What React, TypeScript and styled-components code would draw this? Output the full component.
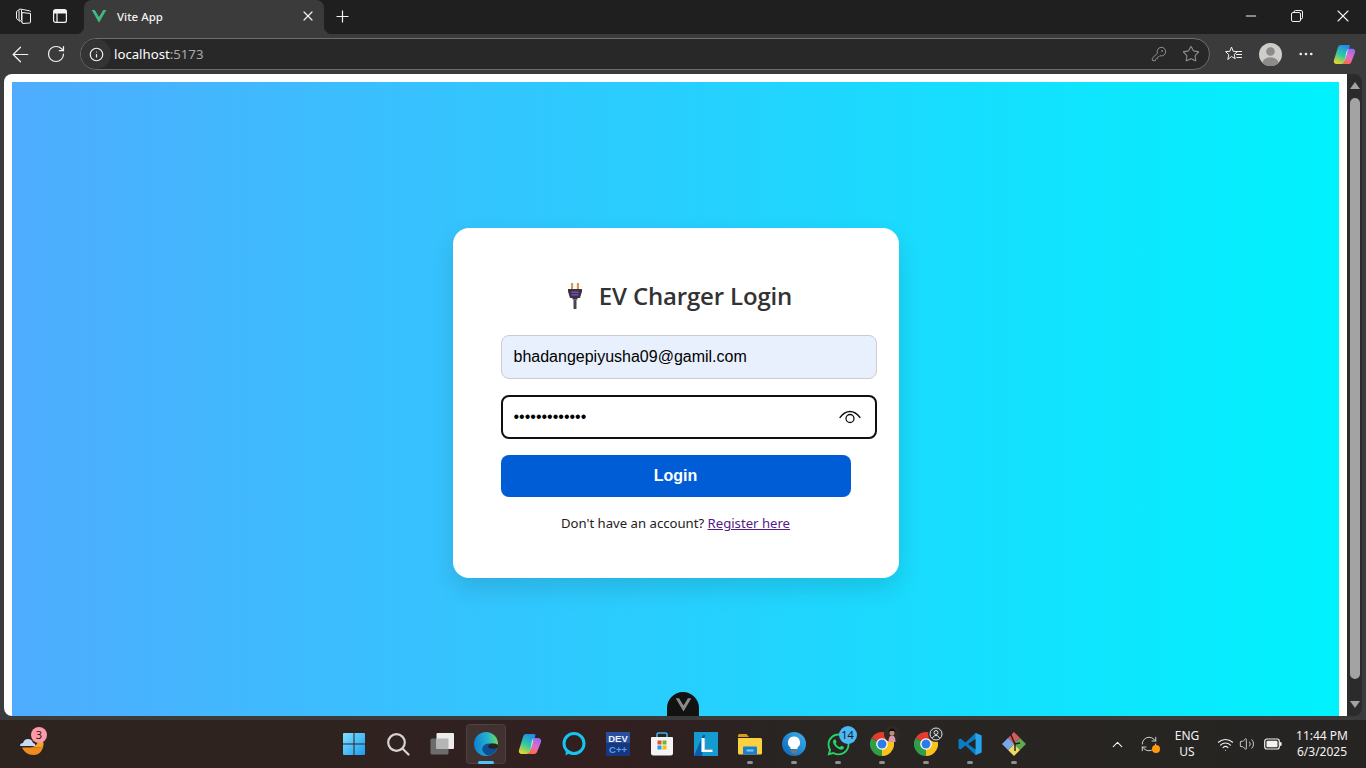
import styled, { createGlobalStyle } from 'styled-components';
import {
  ArrowLeft,
  ChevronUp,
  Info,
  KeyRound,
  Minus,
  MoreHorizontal,
  Plus,
  RefreshCw,
  RotateCw,
  Star,
  Volume2,
  Wifi,
  X,
} from 'lucide-react';
import { FaWhatsapp } from 'react-icons/fa';

const GlobalStyle = createGlobalStyle`
  html, body {
    margin: 0;
    padding: 0;
    overflow: hidden;
    background: #1f1f1f;
  }
  * {
    box-sizing: content-box;
  }
`;

const uiFont = '"Noto Sans", "Open Sans", sans-serif';

const Screen = styled.div`
  width: 1366px;
  height: 768px;
  display: flex;
  flex-direction: column;
  overflow: hidden;
  font-family: ${uiFont};
`;

/* browser chrome */

const TitleBar = styled.div`
  height: 34px;
  flex-shrink: 0;
  display: flex;
  background: #1f1f1f;
  color: #f2f2f2;
`;

const ChromeCell = styled.div<{ $w: number; $lift?: number }>`
  width: ${({ $w }) => $w}px;
  flex-shrink: 0;
  padding-bottom: ${({ $lift }) => $lift ?? 0}px;
  display: flex;
  align-items: center;
  justify-content: center;
  position: relative;
`;

const LeftGroup = styled.div`
  display: flex;
  padding-left: 8px;
  gap: 4px;
  margin-right: 8px;
`;

const Tab = styled.div`
  width: 240px;
  height: 32px;
  padding-bottom: 2px;
  display: flex;
  align-items: center;
  flex-shrink: 0;
  background: #3b3b3b;
  border-radius: 8px 8px 0 0;
  position: relative;

  &::before,
  &::after {
    content: '';
    position: absolute;
    bottom: 0;
    width: 8px;
    height: 8px;
  }
  &::before {
    left: -8px;
    background: radial-gradient(circle at 0 0, transparent 8px, #3b3b3b 8.5px);
  }
  &::after {
    right: -8px;
    background: radial-gradient(circle at 100% 0, transparent 8px, #3b3b3b 8.5px);
  }
`;

const Favicon = styled.div`
  margin-left: 7px;
  width: 16px;
  height: 16px;
  display: flex;
`;

const TabTitle = styled.span`
  margin-left: 10px;
  flex: 1;
  font-size: 11.5px;
  font-weight: 500;
  color: #f0f0f0;
`;

const TabClose = styled.div`
  width: 30px;
  margin-right: 1px;
  display: flex;
  justify-content: center;
`;

const Spacer = styled.div`
  flex: 1;
`;

const Toolbar = styled.div`
  height: 40px;
  flex-shrink: 0;
  display: flex;
  align-items: center;
  padding-left: 2px;
  background: #3b3b3b;
  color: #f2f2f2;
`;

const UrlPill = styled.div`
  width: 1128px;
  height: 30px;
  margin: 0 6px;
  display: flex;
  align-items: center;
  background: #282828;
  border: 1px solid #6e6e6e;
  border-radius: 16px;
`;

const InfoChip = styled.div`
  width: 30px;
  height: 30px;
  border-radius: 50%;
  background: #343434;
  display: flex;
  align-items: center;
  justify-content: center;
`;

const UrlText = styled.span`
  margin-left: 3px;
  flex: 1;
  font-size: 13.2px;
  color: #fff;
`;

const UrlPort = styled.span`
  color: #a8a8a8;
`;

const PillActions = styled.div`
  display: flex;
  padding-right: 2px;
  color: #8f8f8f;
`;

const Avatar = styled.div`
  width: 23px;
  height: 23px;
  border-radius: 50%;
  overflow: hidden;
  display: flex;
`;

/* page */

const Viewport = styled.div`
  height: 642px;
  flex-shrink: 0;
  display: flex;
  padding: 0 4px;
  background: #3b3b3b;
`;

const Page = styled.main`
  flex: 1;
  min-width: 0;
  padding: 8px 8px 0;
  background: #fff;
  border-radius: 8px 0 0 8px;
  overflow: hidden;
  position: relative;
`;

const GradientBackdrop = styled.div`
  height: 642px;
  display: flex;
  align-items: center;
  justify-content: center;
  background: linear-gradient(to right, #4facfe, #00f2fe);
`;

const Card = styled.section`
  width: 350px;
  height: 254px;
  padding: 48px;
  background: #fff;
  border-radius: 16px;
  box-shadow: 0 10px 25px rgba(0, 0, 0, 0.12);
`;

const Heading = styled.h2`
  margin: 0;
  height: 39px;
  padding-left: 7px;
  display: flex;
  align-items: center;
  justify-content: center;
  gap: 15px;
  font-family: "Open Sans", "Noto Sans", sans-serif;
  font-size: 24px;
  font-weight: 600;
  letter-spacing: -0.17px;
  color: #333;
`;

const FieldWrap = styled.div`
  position: relative;
  margin-top: 16px;
  width: 376px;
  height: 44px;

  ${Heading} + & {
    margin-top: 20px;
  }
`;

const TextInput = styled.input<{ $focused?: boolean }>`
  width: 350px;
  height: 18px;
  padding: ${({ $focused }) => ($focused ? '11px' : '12px')};
  display: block;
  font-family: "Liberation Sans", Arial, sans-serif;
  font-size: 16px;
  color: #000;
  background: ${({ $focused }) => ($focused ? '#fff' : '#e8f0fe')};
  border: ${({ $focused }) => ($focused ? '2px solid #101010' : '1px solid #ccc')};
  border-radius: 8px;
  outline: none;
`;

const EyeButton = styled.button`
  position: absolute;
  right: 15px;
  top: 13px;
  width: 24px;
  height: 18px;
  padding: 0;
  border: 0;
  background: none;
  display: flex;
`;

const LoginButton = styled.button`
  display: block;
  width: 350px;
  height: 42px;
  margin-top: 16px;
  padding: 0;
  border: 0;
  border-radius: 8px;
  background: #005dd6;
  color: #fff;
  font-family: "Liberation Sans", Arial, sans-serif;
  font-size: 16px;
  font-weight: 700;
`;

const Hint = styled.p`
  margin: 16px 0 0;
  text-align: center;
  font-family: "Noto Sans", "Open Sans", sans-serif;
  font-size: 13.15px;
  line-height: 20px;
  color: #222;
`;

const HintLink = styled.a`
  color: #551a8b;
  text-decoration: underline;
`;

const DevtoolsHandle = styled.div`
  position: absolute;
  left: 663px;
  bottom: 0;
  width: 32px;
  height: 24px;
  border-radius: 16px 16px 0 0;
  background: #121212;
  display: flex;
  align-items: center;
  justify-content: center;
`;

const Scrollbar = styled.div`
  width: 15px;
  flex-shrink: 0;
  display: flex;
  flex-direction: column;
  align-items: center;
  background: #2b2b2b;
  border-radius: 0 8px 8px 0;
`;

const ScrollArrow = styled.div<{ $down?: boolean }>`
  width: 0;
  height: 0;
  margin: ${({ $down }) => ($down ? '22px 0 8px' : '8px 0 9px')};
  border-left: 5px solid transparent;
  border-right: 5px solid transparent;
  ${({ $down }) => ($down ? 'border-top: 7px solid #a3a3a3;' : 'border-bottom: 7px solid #a3a3a3;')}
`;

const ScrollThumb = styled.div`
  flex: 1;
  width: 10px;
  border-radius: 5px;
  background: #a3a3a3;
`;

/* taskbar */

const Taskbar = styled.footer`
  height: 48px;
  flex-shrink: 0;
  display: flex;
  align-items: center;
  padding-left: 10px;
  border-top: 4px solid #3b3b3b;
  background: linear-gradient(to right, #2e241f 0%, #2f2320 25%, #321f20 45%, #282522 58%, #262422 100%);
  color: #fff;
`;

const AppCell = styled.div`
  width: 44px;
  height: 48px;
  flex-shrink: 0;
  display: flex;
  align-items: center;
  justify-content: center;
  position: relative;
`;

const ActiveBox = styled.div`
  position: absolute;
  left: 2px;
  top: 4px;
  width: 38px;
  height: 38px;
  border: 1px solid rgba(255, 255, 255, 0.07);
  border-radius: 4px;
  background: rgba(255, 255, 255, 0.08);
`;

const RunDot = styled.div<{ $active?: boolean }>`
  position: absolute;
  bottom: 4px;
  left: 50%;
  transform: translateX(-50%);
  width: ${({ $active }) => ($active ? 16 : 6)}px;
  height: 3px;
  border-radius: 2px;
  background: ${({ $active }) => ($active ? '#4cc2ff' : '#8f8f8f')};
`;

const IconLayer = styled.div`
  position: relative;
  display: flex;
`;

const Badge = styled.div<{ $bg: string; $size: number; $right: number; $top: number }>`
  position: absolute;
  right: ${({ $right }) => $right}px;
  top: ${({ $top }) => $top}px;
  width: ${({ $size }) => $size}px;
  height: ${({ $size }) => $size}px;
  border-radius: 50%;
  background: ${({ $bg }) => $bg};
  color: #1a1a1a;
  font-size: 11px;
  line-height: ${({ $size }) => $size}px;
  text-align: center;
`;

const CenterGroup = styled.div`
  display: flex;
  margin-left: 278px;
`;

const TrayGroup = styled.div`
  display: flex;
  margin-left: 67px;
  height: 48px;
`;

const TrayCell = styled.div<{ $w: number; $ml?: number }>`
  width: ${({ $w }) => $w}px;
  margin-left: ${({ $ml }) => $ml ?? 0}px;
  display: flex;
  flex-direction: column;
  align-items: center;
  justify-content: center;
  position: relative;
  font-size: 12px;
  line-height: 16px;
  color: #f2f2f2;
`;

const SyncDot = styled.div`
  position: absolute;
  left: 21px;
  top: 25px;
  width: 8px;
  height: 8px;
  border-radius: 50%;
  background: #ff9a0a;
`;

/* drawings */

const VueMark = ({ size, light, dark }: { size: number; light: string; dark: string }) => (
  <svg width={size} height={size} viewBox="0 0 24 24">
    <path d="M1 3h5l6 10 6-10h5L12 22z" fill={light} />
    <path d="M6 3h4l2 3.5L14 3h4l-6 10z" fill={dark} />
  </svg>
);

const Workspaces = () => (
  <svg width="18" height="18" viewBox="0 0 18 18" fill="none" stroke="#f2f2f2" strokeWidth="1">
    <path d="M1.500 4.500 5 2l9.500 1.800a1 1 0 0 1 1 1" />
    <path d="M1.500 4.500V11.500l3.500 3" />
    <path d="M4 3.500v9l3.600 3" />
    <path d="M6.500 3v10" />
    <path d="M7 5.500l8.500 1V15a1 1 0 0 1-1 1L8 16.500a1 1 0 0 1-1-1z" />
  </svg>
);

const TabActions = () => (
  <svg width="16" height="16" viewBox="0 0 16 16" fill="none" stroke="#f2f2f2" strokeWidth="1.2">
    <rect x="1.600" y="1.600" width="12.800" height="12.800" rx="2" />
    <path d="M1.600 5h12.800M5 5v9.400" />
    <path d="M2 2h12v3H2z" fill="#f2f2f2" stroke="none" />
  </svg>
);

const RestoreIcon = () => (
  <svg width="12" height="12" viewBox="0 0 12 12" fill="none" stroke="#f2f2f2" strokeWidth="1">
    <rect x="0.500" y="2.500" width="9" height="9" rx="1.500" />
    <path d="M3 2.200V2a1.500 1.500 0 0 1 1.500-1.500h5.500A1.500 1.500 0 0 1 11.500 2v5.500A1.500 1.500 0 0 1 10 9" />
  </svg>
);

const FavoritesIcon = () => (
  <svg width="18" height="18" viewBox="0 0 18 18" fill="none" stroke="#f2f2f2" strokeWidth="1">
    <path d="M6.500 2l1.700 4.300 4.300.3-3.300 2.800 1 4.300-3.700-2.200-3.700 3 1-4.800L.6 6.600l4.300-.3z" strokeLinejoin="round" />
    <path d="M12 6.500h5M11 9.500h6M11.500 12.500h5.500" />
  </svg>
);

const ProfileGlyph = () => (
  <svg width="23" height="23" viewBox="0 0 23 23">
    <rect width="23" height="23" fill="#cfcdca" />
    <circle cx="11.500" cy="8.500" r="4.300" fill="#8b8b8b" />
    <ellipse cx="11.500" cy="20" rx="8" ry="5.800" fill="#8b8b8b" />
  </svg>
);

const CopilotMark = ({ size, id }: { size: number; id: string }) => (
  <svg width={size} height={size} viewBox="0 0 24 24">
    <defs>
      <linearGradient id={`${id}a`} x1="0.6" y1="0" x2="0.2" y2="1">
        <stop offset="0" stopColor="#1f8fe8" />
        <stop offset="0.5" stopColor="#2ec9a0" />
        <stop offset="1" stopColor="#f5d327" />
      </linearGradient>
      <linearGradient id={`${id}b`} x1="0.7" y1="0" x2="0.3" y2="1">
        <stop offset="0" stopColor="#8f6cf0" />
        <stop offset="0.5" stopColor="#e868c8" />
        <stop offset="1" stopColor="#ff6a3c" />
      </linearGradient>
    </defs>
    <path d="M8 2h8c1.200 0 1.800.7 1.300 2L12 20c-.7 1.500-2 2-3.500 2H4c-2.500 0-3.700-1.800-3-4L5 5c.6-2 1.500-3 3-3z" fill={`url(#${id}a)`} />
    <path d="M15.500 6H20c2.500 0 3.700 1.800 3 4l-4 10c-.7 1.500-1.800 2-3.300 2H8c1.800 0 3.200-.8 4-2.500L14 14c.6-1.800 1-4 1.500-8z" fill={`url(#${id}b)`} />
    <path d="M15.500 6c-.4 3-.9 6-1.500 8l-2 5.500c.4-2.500 1-4 1.200-6.500.2-2.500 1-5 2.300-7z" fill="#fff" opacity="0.75" />
  </svg>
);

const WidgetIcon = () => (
  <svg width="24" height="24" viewBox="0 0 24 24">
    <path d="M2 15.500h18c2 0 3-2.500 3.500-5 .5 6-3 12.500-10 12.500-5.500 0-9.500-3-11.500-7.500z" fill="#f08c1e" />
    <path d="M18 9c2 0 4 0 5.500 1.500 0 3-1.500 5-3.500 5H8c5 0 9-1.500 10-6.500z" fill="#f5a623" />
    <path d="M0 14c0-1.800 1.300-3 3-3 .7-2.500 2.700-4 5-4 2.500 0 4.500 1.500 5 4 1.300 0 2.500 1.200 2.500 3z" fill="#c9dcf5" />
  </svg>
);

const WindowsLogo = () => (
  <svg width="24" height="24" viewBox="0 0 24 24">
    <defs>
      <linearGradient id="winTile" x1="0" y1="0" x2="1" y2="1">
        <stop offset="0" stopColor="#7fe0ff" />
        <stop offset="1" stopColor="#1a9cf0" />
      </linearGradient>
    </defs>
    <path d="M1 2a1 1 0 0 1 1-1h9.500v10.500H1zM12.500 1H22a1 1 0 0 1 1 1v9.500H12.500zM1 12.500h10.500V23H2a1 1 0 0 1-1-1zM12.500 12.500H23V22a1 1 0 0 1-1 1h-9.500z" fill="url(#winTile)" />
  </svg>
);

const SearchGlyph = () => (
  <svg width="24" height="24" viewBox="0 0 24 24" fill="none" stroke="#d8d4d0" strokeWidth="2.200">
    <circle cx="10.500" cy="10.500" r="8.300" />
    <path d="M16.500 16.500l6 6" strokeLinecap="round" />
  </svg>
);

const TaskViewGlyph = () => (
  <svg width="24" height="24" viewBox="0 0 24 24">
    <rect x="0.500" y="6.500" width="18" height="16" rx="1.500" fill="#6c6c6c" />
    <rect x="6.500" y="1" width="17.500" height="16" rx="1" fill="#ececec" />
    <rect x="6.500" y="6.500" width="12" height="10.500" fill="#b5b5b5" />
  </svg>
);

const EdgeLogo = () => (
  <svg width="24" height="24" viewBox="0 0 24 24">
    <defs>
      <linearGradient id="edgeBody" x1="0" y1="0.4" x2="1" y2="0.3">
        <stop offset="0" stopColor="#0f7fd4" />
        <stop offset="0.6" stopColor="#27b5c8" />
        <stop offset="1" stopColor="#6fdc5a" />
      </linearGradient>
    </defs>
    <circle cx="12" cy="12" r="12" fill="url(#edgeBody)" />
    <path d="M24 14.500c-2-2.500-5.500-3.500-9.500-3-4.500.5-7 3.500-6 7 .6 2.300 3 4.500 6 5.200 4.500-.8 8-4.500 9.500-9.200z" fill="#0d4f96" />
    <path d="M24 12.800c-3-1.800-7-1.500-9 0-1.500 1.200-1.200 3 .8 3.500 2.500.6 5 .5 7.700-.3.300-1 .5-2.100.5-3.200z" fill="#2b211e" />
  </svg>
);

const AlexaRing = () => (
  <svg width="24" height="24" viewBox="0 0 24 24" fill="none">
    <circle cx="12" cy="11.500" r="10" stroke="#12c6f0" strokeWidth="3" />
    <path d="M4 16.500 3.500 23.500 9.500 20z" fill="#12c6f0" />
  </svg>
);

const DevCpp = () => (
  <svg width="24" height="24" viewBox="0 0 24 24">
    <rect width="24" height="24" fill="#17387f" />
    <rect width="24" height="11" fill="#2a4f9c" />
    <text x="12" y="10" textAnchor="middle" fontFamily="Liberation Sans" fontWeight="700" fontSize="9.500" fill="#eef2ff">DEV</text>
    <text x="12" y="20.500" textAnchor="middle" fontFamily="Liberation Sans" fontWeight="700" fontSize="9.500" fill="#5aa0f0">C++</text>
  </svg>
);

const StoreBag = () => (
  <svg width="24" height="24" viewBox="0 0 24 24">
    <path d="M7 5V2.500A1.500 1.500 0 0 1 8.500 1h7A1.500 1.500 0 0 1 17 2.500V5" fill="none" stroke="#3fb4e8" strokeWidth="1.600" />
    <path d="M1 6a1 1 0 0 1 1-1h20a1 1 0 0 1 1 1v15a2.500 2.500 0 0 1-2.500 2.500h-17A2.500 2.500 0 0 1 1 21z" fill="#f4f4f4" />
    <rect x="7.500" y="8.500" width="4" height="4" fill="#e8502a" />
    <rect x="12.500" y="8.500" width="4" height="4" fill="#72b52a" />
    <rect x="7.500" y="13.500" width="4" height="4" fill="#1fa0e8" />
    <rect x="12.500" y="13.500" width="4" height="4" fill="#f9b916" />
  </svg>
);

const LTile = () => (
  <svg width="24" height="24" viewBox="0 0 24 24">
    <rect width="24" height="24" fill="#149bd0" />
    <path d="M0 24 9 3h2L8 24z" fill="#0c5aa8" />
    <text x="12.500" y="19.500" textAnchor="middle" fontFamily="Liberation Sans" fontWeight="700" fontSize="21" fill="#fff">L</text>
  </svg>
);

const FolderIcon = () => (
  <svg width="24" height="24" viewBox="0 0 24 24">
    <path d="M0 3.500A1.500 1.500 0 0 1 1.500 2h7L11 5h-11z" fill="#d99a16" />
    <path d="M0 6h22.500A1.500 1.500 0 0 1 24 7.500V21a1.500 1.500 0 0 1-1.500 1.500h-21A1.500 1.500 0 0 1 0 21z" fill="#fbd13f" />
    <path d="M6 14.500h12a1 1 0 0 1 1 1v7H5v-7a1 1 0 0 1 1-1z" fill="#1a7fd0" />
    <rect x="8.500" y="17.500" width="7" height="2" fill="#7ec8f5" />
  </svg>
);

const BulbIcon = () => (
  <svg width="24" height="24" viewBox="0 0 24 24">
    <defs>
      <linearGradient id="bulbDisk" x1="0" y1="1" x2="1" y2="0">
        <stop offset="0" stopColor="#0b62b8" />
        <stop offset="1" stopColor="#3cb4ef" />
      </linearGradient>
    </defs>
    <circle cx="12" cy="12" r="12" fill="url(#bulbDisk)" />
    <path d="M12 4.500a6 6 0 0 1 3.500 10.900V17h-7v-1.600A6 6 0 0 1 12 4.500z" fill="#fff" />
    <path d="M9 18h6v2l-1.500 1.500h-3L9 20z" fill="#777" />
  </svg>
);

const ChromeLogo = () => (
  <svg width="24" height="24" viewBox="0 0 24 24">
    <path d="M12 12 1.600 6A12 12 0 0 1 22.400 6z" fill="#e33b2e" />
    <path d="M12 12 22.400 6A12 12 0 0 1 12 24z" fill="#fbc21b" />
    <path d="M12 12 12 24A12 12 0 0 1 1.600 6z" fill="#2f9e46" />
    <circle cx="12" cy="12" r="5.800" fill="#fff" />
    <circle cx="12" cy="12" r="4.500" fill="#2a7de8" />
  </svg>
);

const ChromePhoto = () => (
  <svg width="16" height="16" viewBox="0 0 16 16">
    <circle cx="8" cy="8" r="8" fill="#2f2a26" />
    <path d="M4.500 16c0-4 1-6.500 3.500-6.500s3.500 2.500 3.500 6.500z" fill="#d99aa8" />
    <circle cx="8" cy="7" r="2.500" fill="#c48a78" />
    <path d="M4.500 7c0-3 1.500-4.500 3.500-4.500S11.500 4 11.500 7L10 5H6z" fill="#141010" />
  </svg>
);

const ChromeProfile = () => (
  <svg width="16" height="16" viewBox="0 0 16 16" fill="none" stroke="#e0e0e0" strokeWidth="1">
    <circle cx="8" cy="8" r="8" fill="#2b2b2b" stroke="none" />
    <circle cx="8" cy="8" r="6" />
    <circle cx="8" cy="6.500" r="2" />
    <path d="M4.500 12c.8-1.700 2-2.500 3.500-2.500s2.700.8 3.500 2.500" />
  </svg>
);

const VsCodeLogo = () => (
  <svg width="24" height="24" viewBox="0 0 24 24">
    <path d="M17.500 1 23.500 3.500v17L17.500 23 7.500 13.500 2.500 17.500 0.500 16.500v-9l2-1 5 4z" fill="#0a7cc4" />
    <path d="M17.500 1 23.500 3.500v17L17.500 23z" fill="#2aa3ea" />
    <path d="M17.500 7 10 12l7.500 5.500z" fill="#262422" />
  </svg>
);

const GitDiamond = () => (
  <svg width="24" height="24" viewBox="0 0 24 24">
    <path d="M6 6 12 0l6 6-6 6z" fill="#d75a5a" />
    <path d="M12 12l6-6 6 6-6 6z" fill="#5fa84f" />
    <path d="M6 18l6-6 6 6-6 6z" fill="#ecd968" />
    <path d="M0 12l6-6 6 6-6 6z" fill="#7ba7ec" />
    <path d="M8 1l5 11v7M13 12l5-1" fill="none" stroke="#1c1c1c" strokeWidth="1.400" />
  </svg>
);

const PlugEmoji = () => (
  <svg width="18" height="26" viewBox="0 0 18 26">
    <rect x="5" y="0" width="2.200" height="6" fill="#d49a5a" />
    <rect x="10.800" y="0" width="2.200" height="6" fill="#d49a5a" />
    <path d="M2 6h14v2.500l-2 6.500h-2.500v1.500h-5V15H4L2 8.500z" fill="#3a3442" />
    <rect x="5.500" y="8.500" width="7" height="1.500" fill="#7a4bc0" />
    <rect x="5.500" y="11" width="7" height="1.500" fill="#7a4bc0" />
    <rect x="7.500" y="16.500" width="3" height="9.500" fill="#4a4550" />
  </svg>
);

const EyeGlyph = () => (
  <svg width="24" height="18" viewBox="0 0 24 18" fill="none" stroke="#111" strokeWidth="1.300" strokeLinecap="round">
    <path d="M2 9.500C5 5.500 8.500 3.500 12 3.500s7 2 10 6" />
    <circle cx="12" cy="10.500" r="4" />
  </svg>
);

const TrayBattery = () => (
  <svg width="18" height="12" viewBox="0 0 18 12" fill="none">
    <rect x="0.700" y="1" width="14.600" height="10" rx="2.200" stroke="#f2f2f2" strokeWidth="1.200" />
    <rect x="2.500" y="2.800" width="11" height="6.400" rx="1" fill="#f2f2f2" />
    <rect x="16" y="4" width="1.600" height="4" rx="0.700" fill="#f2f2f2" />
  </svg>
);

const App = () => {
  return (
    <Screen>
      <GlobalStyle />
      <TitleBar>
        <LeftGroup>
          <ChromeCell $w={32} $lift={2}>
            <Workspaces />
          </ChromeCell>
          <ChromeCell $w={32} $lift={2}>
            <TabActions />
          </ChromeCell>
        </LeftGroup>
        <Tab>
          <Favicon>
            <VueMark size={16} light="#41b883" dark="#3b3b3b" />
          </Favicon>
          <TabTitle>Vite App</TabTitle>
          <TabClose>
            <X size={16} strokeWidth={1.2} absoluteStrokeWidth />
          </TabClose>
        </Tab>
        <ChromeCell $w={36} $lift={2}>
          <Plus size={19} strokeWidth={1.2} absoluteStrokeWidth />
        </ChromeCell>
        <Spacer />
        <ChromeCell $w={46} $lift={2}>
          <Minus size={16} strokeWidth={1.1} absoluteStrokeWidth />
        </ChromeCell>
        <ChromeCell $w={46} $lift={2}>
          <RestoreIcon />
        </ChromeCell>
        <ChromeCell $w={46} $lift={2}>
          <X size={20} strokeWidth={1.1} absoluteStrokeWidth />
        </ChromeCell>
      </TitleBar>

      <Toolbar>
        <ChromeCell $w={36}>
          <ArrowLeft size={25} strokeWidth={1.2} absoluteStrokeWidth />
        </ChromeCell>
        <ChromeCell $w={36}>
          <RotateCw size={20} strokeWidth={1.2} absoluteStrokeWidth />
        </ChromeCell>
        <UrlPill>
          <InfoChip>
            <Info size={15} strokeWidth={1.2} absoluteStrokeWidth />
          </InfoChip>
          <UrlText>
            localhost<UrlPort>:5173</UrlPort>
          </UrlText>
          <PillActions>
            <ChromeCell $w={32}>
              <KeyRound size={16} strokeWidth={1} absoluteStrokeWidth />
            </ChromeCell>
            <ChromeCell $w={32}>
              <Star size={18} strokeWidth={1.1} absoluteStrokeWidth />
            </ChromeCell>
          </PillActions>
        </UrlPill>
        <ChromeCell $w={36}>
          <FavoritesIcon />
        </ChromeCell>
        <ChromeCell $w={36}>
          <Avatar>
            <ProfileGlyph />
          </Avatar>
        </ChromeCell>
        <ChromeCell $w={36}>
          <MoreHorizontal size={18} strokeWidth={1.6} />
        </ChromeCell>
        <ChromeCell $w={40}>
          <CopilotMark size={23} id="copilotBar" />
        </ChromeCell>
      </Toolbar>

      <Viewport>
        <Page>
          <GradientBackdrop>
            <Card>
              <Heading>
                <PlugEmoji />
                EV Charger Login
              </Heading>
              <FieldWrap>
                <TextInput type="email" defaultValue="bhadangepiyusha09@gamil.com" />
              </FieldWrap>
              <FieldWrap>
                <TextInput type="password" defaultValue="Piyusha@12345" $focused />
                <EyeButton type="button" aria-label="Show password">
                  <EyeGlyph />
                </EyeButton>
              </FieldWrap>
              <LoginButton type="button">Login</LoginButton>
              <Hint>
                Don't have an account? <HintLink href="#register">Register here</HintLink>
              </Hint>
            </Card>
          </GradientBackdrop>
          <DevtoolsHandle>
            <VueMark size={17} light="#8a8a8a" dark="#121212" />
          </DevtoolsHandle>
        </Page>
        <Scrollbar>
          <ScrollArrow />
          <ScrollThumb />
          <ScrollArrow $down />
        </Scrollbar>
      </Viewport>

      <Taskbar>
        <AppCell>
          <IconLayer>
            <WidgetIcon />
            <Badge $bg="#ff9aa8" $size={16} $right={-3} $top={-5}>3</Badge>
          </IconLayer>
        </AppCell>
        <CenterGroup>
          <AppCell><WindowsLogo /></AppCell>
          <AppCell><SearchGlyph /></AppCell>
          <AppCell><TaskViewGlyph /></AppCell>
          <AppCell>
            <ActiveBox />
            <IconLayer><EdgeLogo /></IconLayer>
            <RunDot $active />
          </AppCell>
          <AppCell><CopilotMark size={24} id="copilotTask" /></AppCell>
          <AppCell><AlexaRing /></AppCell>
          <AppCell><DevCpp /></AppCell>
          <AppCell><StoreBag /></AppCell>
          <AppCell><LTile /></AppCell>
          <AppCell><FolderIcon /><RunDot /></AppCell>
          <AppCell><BulbIcon /><RunDot /></AppCell>
          <AppCell>
            <IconLayer>
              <FaWhatsapp size={25} color="#25d366" />
              <Badge $bg="#4cb8f5" $size={18} $right={-6} $top={-6}>14</Badge>
            </IconLayer>
            <RunDot />
          </AppCell>
          <AppCell>
            <IconLayer>
              <ChromeLogo />
              <Badge $bg="transparent" $size={16} $right={-6} $top={-6}><ChromePhoto /></Badge>
            </IconLayer>
            <RunDot />
          </AppCell>
          <AppCell>
            <IconLayer>
              <ChromeLogo />
              <Badge $bg="transparent" $size={16} $right={-6} $top={-6}><ChromeProfile /></Badge>
            </IconLayer>
            <RunDot />
          </AppCell>
          <AppCell><VsCodeLogo /><RunDot /></AppCell>
          <AppCell><GitDiamond /><RunDot /></AppCell>
        </CenterGroup>
        <TrayGroup>
          <TrayCell $w={28}>
            <ChevronUp size={17} strokeWidth={1.6} />
          </TrayCell>
          <TrayCell $w={36}>
            <RefreshCw size={18} strokeWidth={1.1} />
            <SyncDot />
          </TrayCell>
          <TrayCell $w={40}>
            <span>ENG</span>
            <span>US</span>
          </TrayCell>
          <TrayCell $w={22} $ml={7}>
            <Wifi size={17} strokeWidth={1.5} />
          </TrayCell>
          <TrayCell $w={22}>
            <Volume2 size={16} strokeWidth={1.2} />
          </TrayCell>
          <TrayCell $w={30}>
            <TrayBattery />
          </TrayCell>
          <TrayCell $w={68}>
            <span>11:44 PM</span>
            <span>6/3/2025</span>
          </TrayCell>
        </TrayGroup>
      </Taskbar>
    </Screen>
  );
};

export default App;
